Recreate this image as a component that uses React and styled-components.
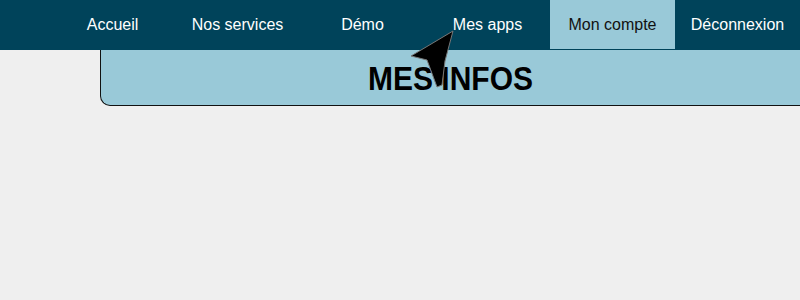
import React from 'react'
import styled, { createGlobalStyle } from 'styled-components'

const Global = createGlobalStyle`
  body {
    margin: 0;
    background: #efefef;
    font-family: "Liberation Sans", Arial, sans-serif;
  }
`

const links = ['Accueil', 'Nos services', 'Démo', 'Mes apps', 'Mon compte', 'Déconnexion']

export default function App() {
  return (
    <Page>
      <Global />
      <Nav>
        {links.map((l) => (
          <NavItem key={l} $active={l === 'Mon compte'}>{l}</NavItem>
        ))}
      </Nav>
      <Banner>
        <Title>MES INFOS</Title>
      </Banner>
      <Cursor width="60" height="70" viewBox="0 0 60 70">
        <path d="M53 6 L11 31 L27 35 L37 62 L42 60 L45 36 Z" fill="#000" stroke="#777" strokeWidth="1" strokeLinejoin="round" />
      </Cursor>
    </Page>
  )
}

const Page = styled.div`
position: relative;
width: 800px;
height: 300px;
overflow: hidden;
`

const Nav = styled.nav`
display: flex;
justify-content: flex-end;
height: 50px;
background: #00435a;
`

const NavItem = styled.a`
display: flex;
align-items: center;
justify-content: center;
width: 125px;
height: 49px;
font-size: 16px;
color: ${(p) => (p.$active ? '#111' : '#fff')};
background: ${(p) => (p.$active ? '#99c9d8' : 'transparent')};
cursor: pointer;
`

const Banner = styled.div`
margin-left: 100px;
height: 55px;
display: flex;
align-items: center;
justify-content: center;
background: #99c9d8;
border-left: 1px solid #111;
border-bottom: 1px solid #111;
border-bottom-left-radius: 10px;
`

const Title = styled.h1`
margin: 2px 0 0;
font-size: 30px;
font-weight: bold;
color: #000;
transform: scaleY(1.08);
`

const Cursor = styled.svg`
position: absolute;
left: 400px;
top: 25px;
`
